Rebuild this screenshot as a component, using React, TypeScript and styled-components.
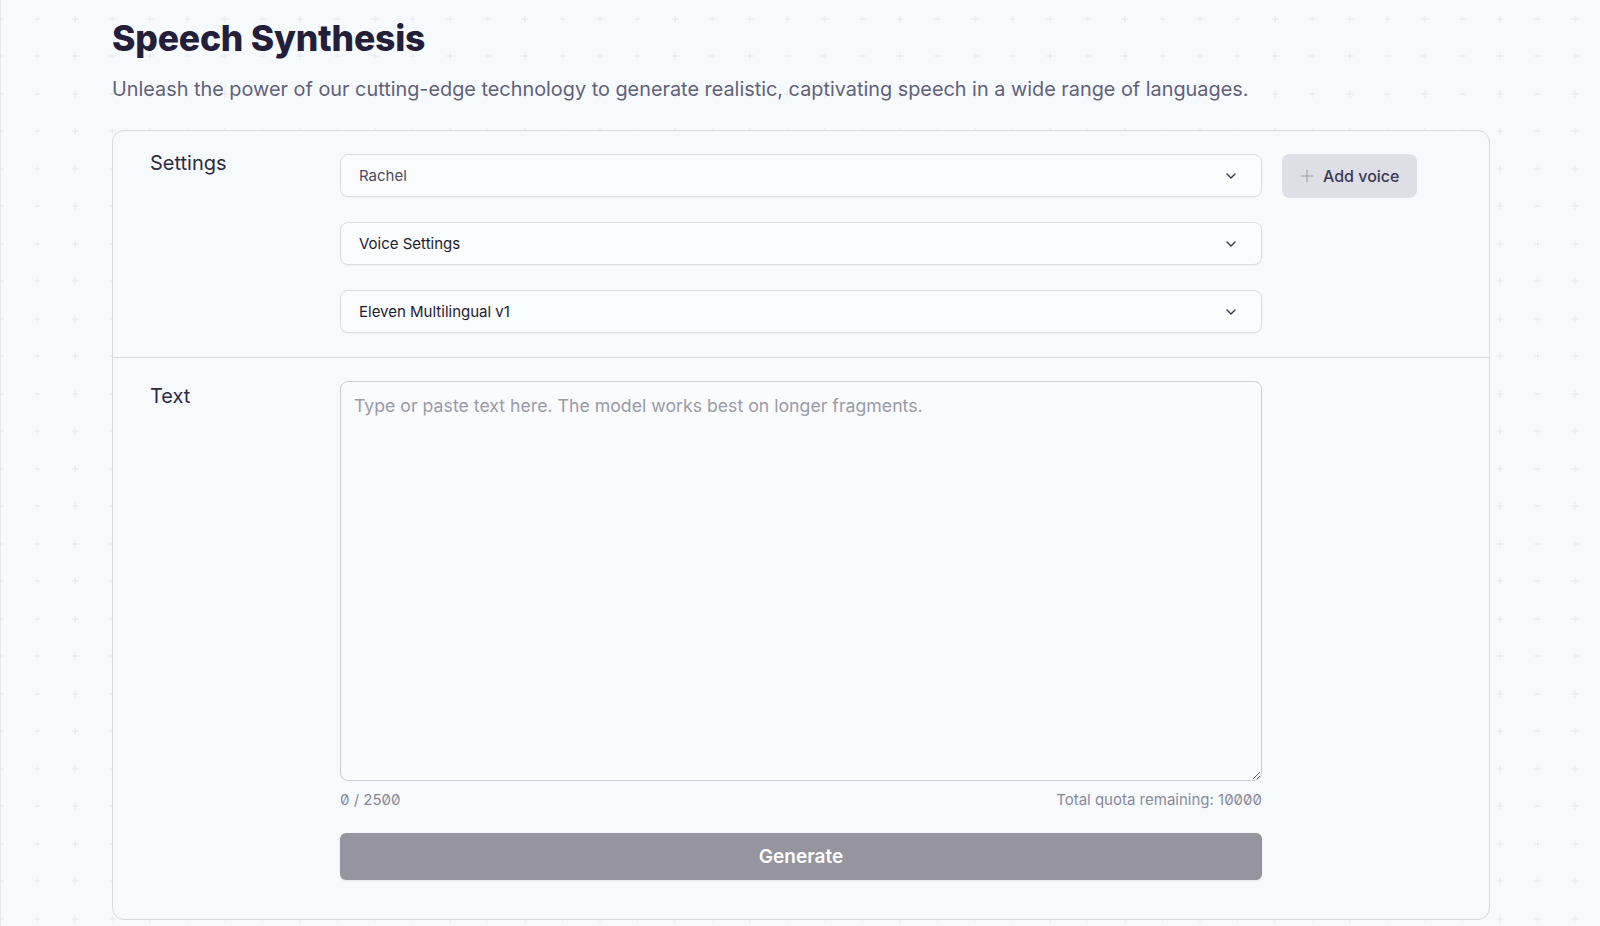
import styled, { createGlobalStyle } from "styled-components";
import { ChevronDown, Plus } from "lucide-react";

const plusTile = encodeURIComponent(
  `<svg xmlns='http://www.w3.org/2000/svg' width='37.5' height='37.5'><path d='M18.75 15.25v7M15.25 18.75h7' stroke='#e3e6ec' stroke-width='1'/></svg>`
);

const GlobalStyle = createGlobalStyle`
  html, body {
    margin: 0;
    padding: 0;
  }
  body {
    font-family: Inter, "Noto Sans", "Liberation Sans", sans-serif;
    background-color: #f7fafc;
    background-image: url("data:image/svg+xml,${plusTile}");
    background-size: 37.5px 37.5px;
    background-position: -18.75px 0;
    color: #231d3a;
  }
`;

const Page = styled.div`
  min-height: 926px;
  box-sizing: border-box;
  border-left: 1px solid #e4e7ec;
  padding: 18px 0 0 111px;
  width: 1490px;
`;

const Title = styled.h1`
  margin: 0;
  font-size: 35.5px;
  line-height: 42px;
  font-weight: 800;
  letter-spacing: -0.2px;
  color: #241e3b;
`;

const Subtitle = styled.p`
  margin: 15px 0 0;
  font-size: 19.85px;
  line-height: 28px;
  color: #62617a;
`;

const Card = styled.div`
  margin-top: 27px;
  border: 1px solid #d8d9e1;
  border-radius: 12px;
  background: #f7fafc;
  overflow: hidden;
`;

const Section = styled.div<{ $bottom: number; $divider?: boolean }>`
  display: grid;
  grid-template-columns: 207px 922px 135px;
  column-gap: 20px;
  padding: 23px 0 ${(p) => p.$bottom}px;
  border-bottom: ${(p) => (p.$divider ? "1px solid #d8d9e1" : "none")};
`;

const Label = styled.div<{ $top: number }>`
  padding: ${(p) => p.$top}px 0 0 37px;
  font-size: 20px;
  line-height: 16px;
  color: #2d2a42;
`;

const Stack = styled.div`
  display: flex;
  flex-direction: column;
  gap: 25px;
`;

const SelectBox = styled.div<{ $muted?: boolean }>`
  height: 43px;
  box-sizing: border-box;
  display: flex;
  align-items: center;
  justify-content: space-between;
  padding: 0 22px 0 18px;
  border: 1px solid #dcdde4;
  border-radius: 8px;
  background: #fafcfd;
  box-shadow: 0 1px 2px rgba(30, 30, 60, 0.04);
  font-size: 15px;
  color: ${(p) => (p.$muted ? "#4d4b60" : "#1e1b2e")};
  svg {
    color: #3a3850;
  }
`;

const AddButton = styled.button`
  width: 135px;
  height: 44px;
  display: flex;
  align-items: center;
  gap: 6px;
  border: 0;
  border-radius: 8px;
  background: #dddee6;
  font-family: inherit;
  font-size: 16px;
  font-weight: 500;
  color: #3c3a50;
  padding: 0 0 0 15px;
  cursor: pointer;
  svg {
    color: #9d9cab;
  }
`;

const TextArea = styled.textarea`
  display: block;
  width: 100%;
  height: 400px;
  box-sizing: border-box;
  padding: 12px 13px;
  border: 1.5px solid #cdced8;
  border-radius: 8px;
  background: #f9fbfc;
  font-family: inherit;
  font-size: 17.7px;
  line-height: 24px;
  color: #231d3a;
  resize: vertical;
  outline: none;
  &::placeholder {
    color: #9b9aa9;
  }
`;

const CounterRow = styled.div`
  display: flex;
  justify-content: space-between;
  margin-top: 10px;
  font-size: 15px;
  line-height: 18px;
  color: #8a899a;
  font-feature-settings: "zero" 1;
`;

const GenerateButton = styled.button`
  width: 100%;
  height: 47px;
  margin-top: 24px;
  border: 0;
  border-radius: 6px;
  background: #96949f;
  color: #ffffff;
  font-family: inherit;
  font-size: 19px;
  font-weight: 600;
  box-shadow: 0 1px 2px rgba(30, 30, 60, 0.08);
`;

export default function App() {
  return (
    <>
      <GlobalStyle />
      <Page>
        <Title>Speech Synthesis</Title>
        <Subtitle>
          Unleash the power of our cutting-edge technology to generate realistic, captivating speech in a wide
          range of languages.
        </Subtitle>
        <Card>
          <Section $bottom={24} $divider>
            <Label $top={1}>Settings</Label>
            <Stack>
              <SelectBox $muted>
                Rachel
                <ChevronDown size={16} strokeWidth={2} />
              </SelectBox>
              <SelectBox>
                Voice Settings
                <ChevronDown size={16} strokeWidth={2} />
              </SelectBox>
              <SelectBox>
                Eleven Multilingual v1
                <ChevronDown size={16} strokeWidth={2} />
              </SelectBox>
            </Stack>
            <div>
              <AddButton>
                <Plus size={20} strokeWidth={1.25} />
                Add voice
              </AddButton>
            </div>
          </Section>
          <Section $bottom={39}>
            <Label $top={7}>Text</Label>
            <div>
              <TextArea placeholder="Type or paste text here. The model works best on longer fragments." />
              <CounterRow>
                <span>0 / 2500</span>
                <span>Total quota remaining: 10000</span>
              </CounterRow>
              <GenerateButton>Generate</GenerateButton>
            </div>
          </Section>
        </Card>
      </Page>
    </>
  );
}
